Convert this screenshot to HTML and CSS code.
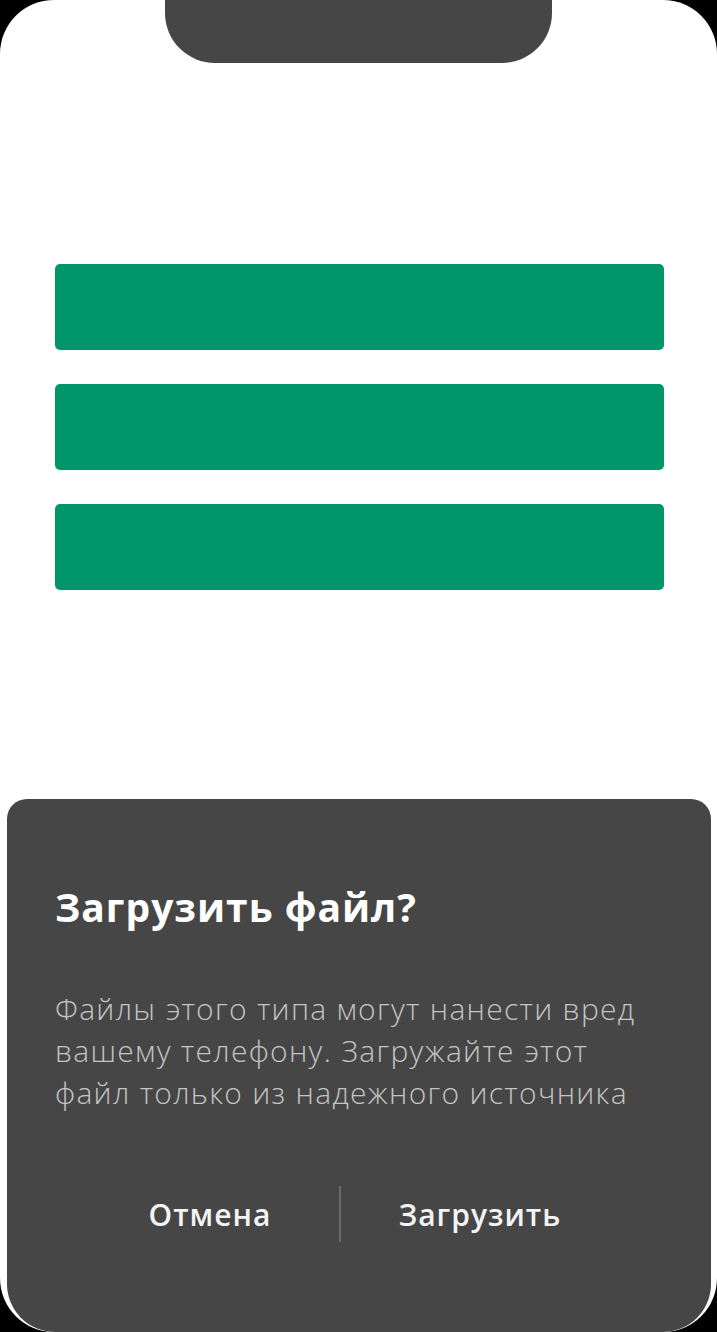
FILE: index.html
```html
<!DOCTYPE html>
<html lang="ru">
<head>
<meta charset="utf-8">
<link rel="stylesheet" href="styles.css">
</head>
<body>
<div class="phone">
  <div class="notch"></div>
  <div class="bars">
    <div class="bar"></div>
    <div class="bar"></div>
    <div class="bar"></div>
  </div>
  <div class="dialog">
    <h1 class="title">Загрузить файл?</h1>
    <p class="text">Файлы этого типа могут нанести вред вашему телефону. Загружайте этот файл только из надежного источника</p>
    <div class="actions">
      <span class="btn btn-cancel">Отмена</span>
      <span class="divider"></span>
      <span class="btn btn-ok">Загрузить</span>
    </div>
  </div>
</div>
</body>
</html>
```
FILE: styles.css
```css
html, body {
  margin: 0;
  padding: 0;
  background: #000;
}
body {
  width: 717px;
  height: 1332px;
  overflow: hidden;
  font-family: "Open Sans", "Noto Sans", sans-serif;
}
.phone {
  width: 717px;
  height: 1332px;
  background: #fff;
  border-radius: 54px;
  display: flex;
  flex-direction: column;
  align-items: center;
  overflow: hidden;
}
.notch {
  width: 387px;
  height: 63px;
  background: #464646;
  border-radius: 0 0 50px 50px;
  margin-left: -1px;
  flex: none;
}
.bars {
  margin-top: 201px;
  width: 609px;
  margin-left: 1px;
  display: flex;
  flex-direction: column;
  gap: 34px;
}
.bar {
  height: 86px;
  background: #009669;
  border-radius: 5px;
}
.dialog {
  margin-top: auto;
  width: 704px;
  height: 533px;
  margin-left: 1px;
  background: #464646;
  border-radius: 20px 20px 48px 48px;
  box-sizing: border-box;
  padding: 84px 48px 0 48px;
  color: #fff;
  display: flex;
  flex-direction: column;
}
.title {
  margin: 0;
  font-size: 39px;
  font-weight: 700;
  line-height: 48px;
  letter-spacing: 1px;
}
.text {
  margin: 57px 0 0;
  max-width: 600px;
  font-size: 30px;
  font-weight: 300;
  line-height: 42px;
  letter-spacing: 1.3px;
  color: #c4c4c4;
}
.actions {
  margin-top: 72px;
  display: flex;
  align-items: center;
  height: 56px;
  padding-left: 26px;
}
.btn {
  font-size: 30px;
  font-weight: 600;
  letter-spacing: 1px;
  color: #f4f4f4;
  text-align: center;
}
.btn-cancel {
  width: 258px;
}
.btn-ok {
  width: 278px;
}
.divider {
  width: 2px;
  height: 56px;
  background: #6a6a6a;
}
```
